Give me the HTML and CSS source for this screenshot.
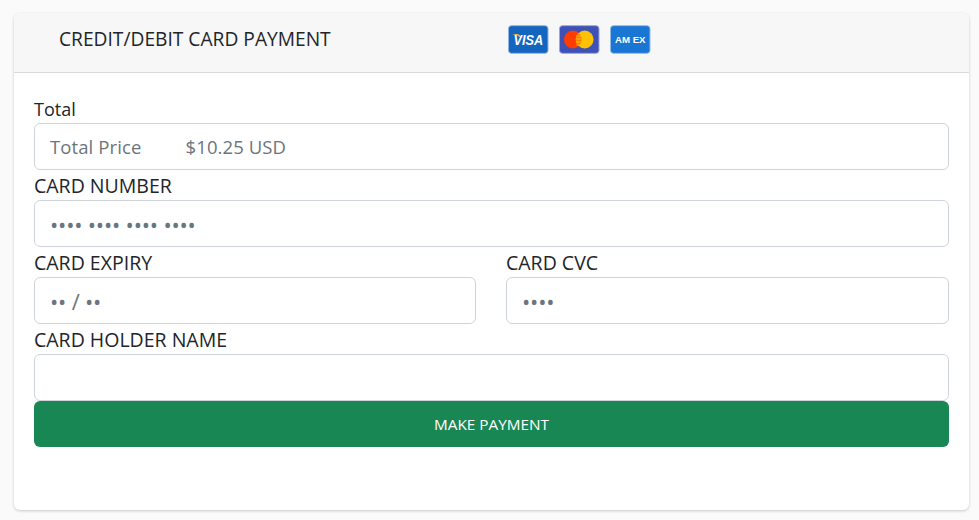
FILE: index.html
```html
<!DOCTYPE html>
<html lang="en">

<head>
    <meta charset="UTF-8">
    <title>Card Payment</title>
    <link rel="stylesheet" href="styles.css">
</head>

<body>
    <div class="card">
        <div class="card-header">
            <h1 class="card-title">CREDIT/DEBIT CARD PAYMENT</h1>
            <div class="card-logos">
                <svg class="logo" viewBox="0 0 41 29">
                    <rect x="0.5" y="0.5" width="40" height="28" rx="3" fill="#1565c0" stroke="#8fb4e3"/>
                    <path d="M4 9 L10 9 Q12.5 9.5 13.5 13 Q10 10 4 9 Z" fill="#f2b33a"/>
                    <text x="20.5" y="20" class="logo-visa" textLength="30" lengthAdjust="spacingAndGlyphs">VISA</text>
                </svg>
                <svg class="logo" viewBox="0 0 41 29">
                    <rect x="0.5" y="0.5" width="40" height="28" rx="3" fill="#3f51b5" stroke="#9aa5dc"/>
                    <circle cx="14" cy="14.5" r="9" fill="#ff3d00"/>
                    <circle cx="26" cy="14.5" r="9" fill="#ffc107"/>
                    <path d="M20 7.8 A9 9 0 0 1 20 21.2 A9 9 0 0 1 20 7.8 Z" fill="#ff7a00"/>
                    <path d="M17.5 11 H22.5 M17 14 H23 M17 17 H23 M17.5 20 H22.5" stroke="#ffc107" stroke-width="1"/>
                </svg>
                <svg class="logo" viewBox="0 0 41 29">
                    <rect x="0.5" y="0.5" width="40" height="28" rx="3" fill="#1976d2" stroke="#8fbce9"/>
                    <text x="20.5" y="18" class="logo-amex" textLength="31" lengthAdjust="spacingAndGlyphs">AM EX</text>
                </svg>
            </div>
        </div>
        <form class="card-body">
            <label class="form-label first-label" for="total">Total</label>
            <input class="form-control total-price" id="total" type="text" placeholder="Total Price &nbsp; &nbsp; &nbsp; &nbsp; $10.25 USD">

            <label class="form-label" for="number">CARD NUMBER</label>
            <input class="form-control dots" id="number" type="text" placeholder="•••• •••• •••• ••••">

            <div class="row">
                <div class="col col-left">
                    <label class="form-label" for="expiry">CARD EXPIRY</label>
                    <input class="form-control dots" id="expiry" type="text" placeholder="•• / ••">
                </div>
                <div class="col">
                    <label class="form-label" for="cvc">CARD CVC</label>
                    <input class="form-control dots" id="cvc" type="text" placeholder="••••">
                </div>
            </div>

            <label class="form-label" for="holder">CARD HOLDER NAME</label>
            <input class="form-control" id="holder" type="text">

            <button class="btn-pay" type="submit">MAKE PAYMENT</button>
        </form>
    </div>
</body>

</html>
```

FILE: styles.css
```css
:root {
    --text-color: #212529;
    --muted-color: #6c757d;
    --border-color: #ced4da;
    --green: #198754;
    --font-family: 'Open Sans', 'Noto Sans', sans-serif;
}

* {
    box-sizing: border-box;
}

body {
    margin: 0;
    padding: 13px 10px 10px 14px;
    background-color: #fafafa;
    color: var(--text-color);
    font-family: var(--font-family);
}

.card {
    height: 497px;
    background: white;
    border-radius: 6px;
    box-shadow: 0 1px 3px rgba(0, 0, 0, 0.2);
    overflow: hidden;
}

.card-header {
    display: flex;
    align-items: center;
    height: 60px;
    padding-left: 45px;
    padding-bottom: 7px;
    background-color: #f7f7f7;
    border-bottom: 1px solid #d9d9d9;
}

.card-title {
    width: 449px;
    margin: 0 0 2px;
    font-size: 19.2px;
    font-weight: 400;
    white-space: nowrap;
}

.card-logos {
    display: flex;
    gap: 10.5px;
}

.logo {
    display: block;
    width: 40.5px;
    height: 29px;
}

.logo-visa {
    fill: white;
    font-family: 'Liberation Sans', sans-serif;
    font-size: 14px;
    font-style: italic;
    font-weight: 700;
    text-anchor: middle;
}

.logo-amex {
    fill: white;
    font-family: 'Liberation Sans', sans-serif;
    font-size: 9.5px;
    font-weight: 700;
    text-anchor: middle;
}

.card-body {
    padding: 20px 20px 0;
}

.form-label {
    display: block;
    height: 30px;
    font-size: 19.5px;
    line-height: 32px;
    white-space: nowrap;
}

.first-label {
    font-size: 18px;
}

.form-control {
    display: block;
    width: 100%;
    height: 47px;
    padding: 0 15px;
    background: white;
    border: 1px solid var(--border-color);
    border-radius: 6px;
    color: var(--text-color);
    font-family: var(--font-family);
    font-size: 18.5px;
}

.form-control::placeholder {
    color: var(--muted-color);
    opacity: 1;
}

.total-price {
    letter-spacing: 0.1px;
}

.dots {
    font-size: 22px;
    letter-spacing: -0.2px;
}

.row {
    display: flex;
    gap: 30px;
}

.col {
    flex: 1;
}

.col-left {
    flex: 0 0 442px;
}

.btn-pay {
    display: block;
    width: 100%;
    height: 46px;
    background-color: var(--green);
    border: none;
    border-radius: 6px;
    color: white;
    font-family: var(--font-family);
    font-size: 15.3px;
    cursor: pointer;
}
```
